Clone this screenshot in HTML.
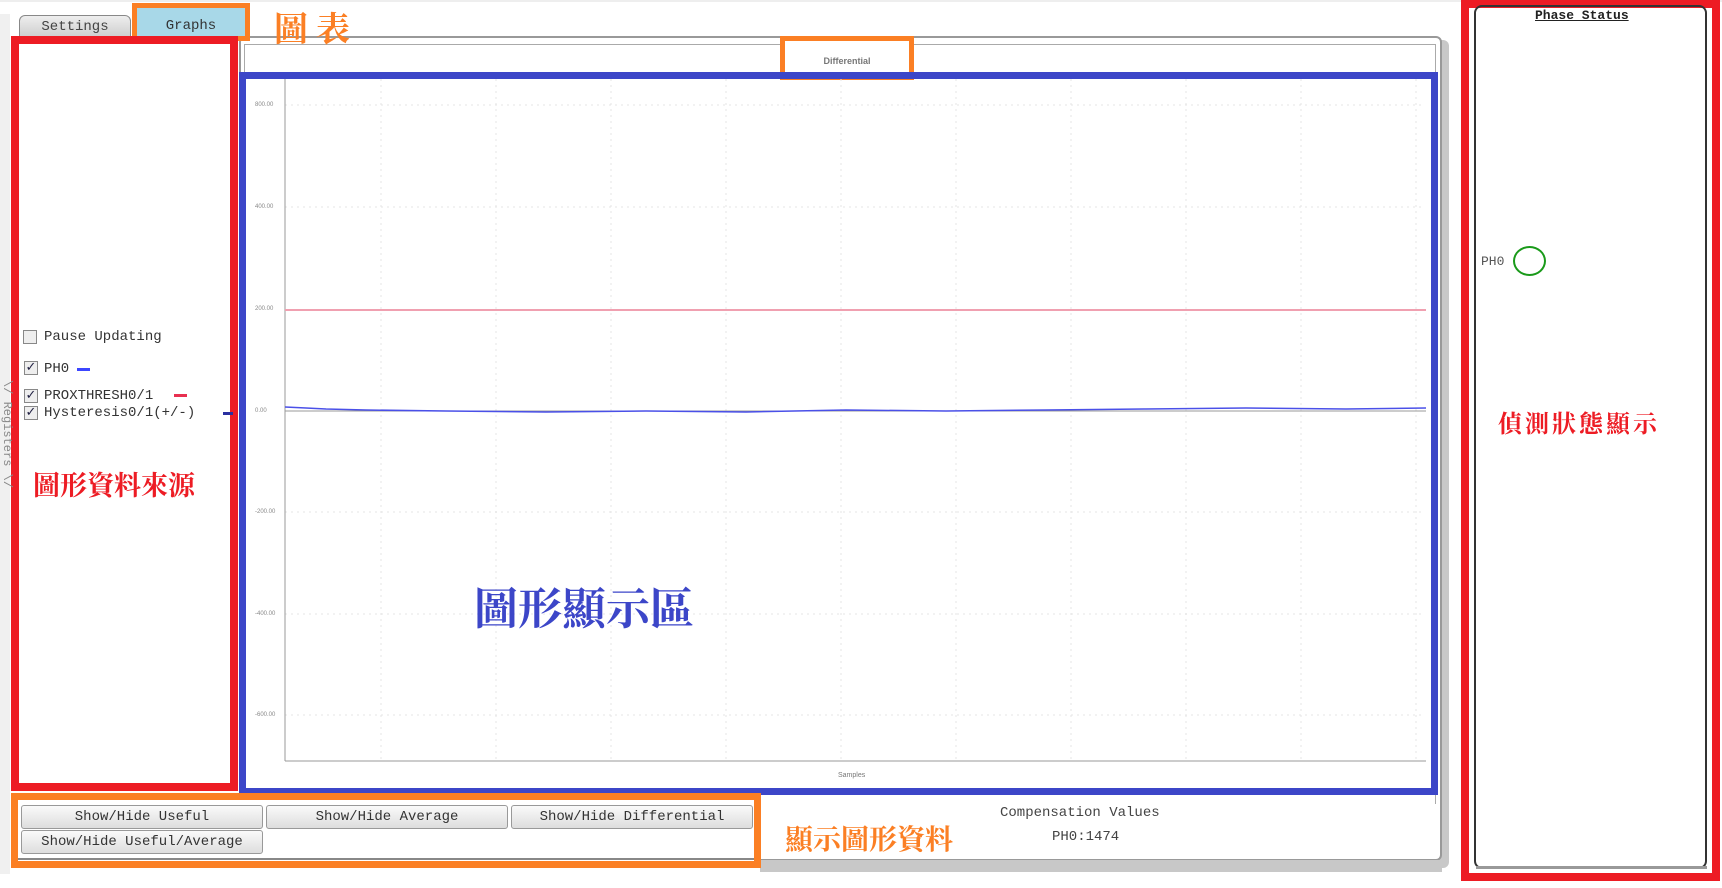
<!DOCTYPE html>
<html><head><meta charset="utf-8"><style>
*{margin:0;padding:0;box-sizing:border-box}
body{width:1722px;height:888px;background:#fff;position:relative;overflow:hidden;font-family:"Liberation Mono",monospace;color:#444}
.a{position:absolute}
.cjk{font-family:"Liberation Serif","Noto Serif CJK SC","WenQuanYi Zen Hei",serif;font-weight:bold;white-space:nowrap}
.btn{position:absolute;height:24px;border:1px solid #999;border-radius:3px;background:linear-gradient(#fafafa,#ddd);font-size:14px;text-align:center;line-height:22px;color:#333}
.cb{position:absolute;width:14px;height:14px;border:1px solid #888;background:#eee;font-size:13px;line-height:12px;color:#224;text-align:center;font-family:"DejaVu Sans",sans-serif}
.lbl{position:absolute;font-size:14px;color:#333;white-space:nowrap}
.yl{position:absolute;font-size:6px;color:#888;font-family:"Liberation Sans",sans-serif;left:255px}
</style></head><body>
<div class="a" style="left:0;top:0;width:1722px;height:2px;background:#eee"></div>
<div class="a" style="left:0;top:14px;width:10px;height:860px;background:#f0f0f0"></div>
<!-- main panel -->
<div class="a" style="left:244px;top:40px;width:1205px;height:828px;background:#c8c8c8;border-radius:6px"></div>
<div class="a" style="left:239px;top:36px;width:1203px;height:825px;border:2px solid #999;border-radius:6px;background:#fff"></div>
<div class="a" style="left:244px;top:44px;width:1192px;height:760px;border:1px solid #aaa;border-bottom:none;background:#fff"></div>
<!-- tabs -->
<div class="a" style="left:19px;top:15px;width:112px;height:24px;border:1px solid #888;border-radius:6px 6px 0 0;background:linear-gradient(#eee,#ccc);font-size:14px;text-align:center;line-height:22px;color:#444">Settings</div>
<div class="a" style="left:132px;top:3px;width:118px;height:38px;border:5px solid #fb7f24;background:#a8d8e8;font-size:14px;text-align:center;line-height:36px;color:#333">Graphs</div>
<div class="a cjk" style="left:274px;top:2px;font-size:34px;color:#fb7f24;letter-spacing:8px;z-index:5">圖表</div>
<div class="a" style="left:780px;top:36px;width:134px;height:44px;border:5px solid #fb7f24;background:#fff;font-size:9px;font-family:'Liberation Sans',sans-serif;color:#777;text-align:center;line-height:40px;font-weight:bold">Differential</div>
<div class="a" style="left:239px;top:72px;width:1199px;height:723px;border:7px solid #3c46c8"></div>
<!-- plot -->
<svg class="a" style="left:246px;top:79px" width="1186" height="710">
<g stroke="#e4e4e4" stroke-dasharray="2,4" stroke-width="1">
<line x1="39" y1="26" x2="1178" y2="26"/><line x1="39" y1="128" x2="1178" y2="128"/><line x1="39" y1="433" x2="1178" y2="433"/><line x1="39" y1="535" x2="1178" y2="535"/><line x1="39" y1="636" x2="1178" y2="636"/>
<line x1="135" y1="0" x2="135" y2="682"/><line x1="250" y1="0" x2="250" y2="682"/><line x1="365" y1="0" x2="365" y2="682"/><line x1="480" y1="0" x2="480" y2="682"/><line x1="595" y1="0" x2="595" y2="682"/><line x1="710" y1="0" x2="710" y2="682"/><line x1="825" y1="0" x2="825" y2="682"/><line x1="940" y1="0" x2="940" y2="682"/><line x1="1055" y1="0" x2="1055" y2="682"/><line x1="1170" y1="0" x2="1170" y2="682"/>
</g>
<line x1="39" y1="0" x2="39" y2="682" stroke="#999"/>
<line x1="39" y1="682" x2="1180" y2="682" stroke="#999"/>
<line x1="39" y1="332" x2="1180" y2="332" stroke="#999"/>
<line x1="39" y1="231" x2="1180" y2="231" stroke="#f0a0b0" stroke-width="2"/>
<polyline fill="none" stroke="#4a50e8" stroke-width="1.5" points="39,328 60,329 80,330 120,331 200,332 300,333 400,332 500,333 600,331 700,332 800,331 900,330 1000,329 1100,330 1180,329"/>
</svg>
<div class="yl" style="top:102px">800.00</div>
<div class="yl" style="top:204px">400.00</div>
<div class="yl" style="top:306px">200.00</div>
<div class="yl" style="top:408px">0.00</div>
<div class="yl" style="top:509px">-200.00</div>
<div class="yl" style="top:611px">-400.00</div>
<div class="yl" style="top:712px">-600.00</div>
<div class="a" style="left:838px;top:772px;font-size:7px;color:#777;font-family:'Liberation Sans',sans-serif">Samples</div>
<div class="a cjk" style="left:474px;top:573px;font-size:44px;color:#3c46c8">圖形顯示區</div>
<!-- left panel -->
<div class="a" style="left:11px;top:36px;width:227px;height:755px;border:8px solid #ed1c24;background:#fff"></div>
<div class="a" style="top:380px;font-size:12px;color:#888;transform:rotate(90deg);transform-origin:0 0;left:14px;white-space:nowrap">\/ Registers \/</div>
<div class="cb" style="left:23px;top:330px"></div><div class="lbl" style="left:44px;top:329px">Pause Updating</div>
<div class="cb" style="left:24px;top:361px">✓</div><div class="lbl" style="left:44px;top:361px">PH0</div><div class="a" style="left:77px;top:368px;width:13px;height:3px;background:#3c46ff"></div>
<div class="cb" style="left:24px;top:389px">✓</div><div class="lbl" style="left:44px;top:388px">PROXTHRESH0/1</div><div class="a" style="left:174px;top:394px;width:13px;height:3px;background:#e83050"></div>
<div class="cb" style="left:24px;top:406px">✓</div><div class="lbl" style="left:44px;top:405px">Hysteresis0/1(+/-)</div><div class="a" style="left:223px;top:412px;width:10px;height:3px;background:#2a30a0"></div>
<div class="a cjk" style="left:33px;top:464px;font-size:27px;color:#ed1c24">圖形資料來源</div>
<!-- bottom -->
<div class="a" style="left:760px;top:860px;width:682px;height:12px;background:#c8c8c8"></div>
<div class="a" style="left:11px;top:793px;width:750px;height:75px;border:7px solid #fb7f24;background:#fff"></div>
<div class="a" style="left:18px;top:858px;width:736px;height:2px;background:#888"></div>
<div class="btn" style="left:21px;top:805px;width:242px">Show/Hide Useful</div>
<div class="btn" style="left:266px;top:805px;width:242px">Show/Hide Average</div>
<div class="btn" style="left:511px;top:805px;width:242px">Show/Hide Differential</div>
<div class="btn" style="left:21px;top:830px;width:242px">Show/Hide Useful/Average</div>
<div class="a cjk" style="left:785px;top:818px;font-size:28px;color:#fb7f24">顯示圖形資料</div>
<div class="a" style="left:1000px;top:805px;font-size:14px;color:#444">Compensation Values</div>
<div class="a" style="left:1052px;top:829px;font-size:14px;color:#444">PH0:1474</div>
<!-- right panel -->
<div class="a" style="left:1461px;top:0;width:259px;height:881px;border:8px solid #ed1c24;background:#fff"></div>
<div class="a" style="left:1474px;top:5px;width:233px;height:864px;border:2px solid #333;border-radius:8px"></div>
<div class="a" style="left:1476px;top:866px;width:231px;height:3px;background:#999"></div>
<div class="a" style="left:1535px;top:8px;font-size:13px;font-weight:bold;color:#222;text-decoration:underline">Phase Status</div>
<div class="a" style="left:1481px;top:254px;font-size:13px;color:#555">PH0</div>
<div class="a" style="left:1513px;top:246px;width:33px;height:30px;border:2px solid #1a9a1a;border-radius:50%"></div>
<div class="a cjk" style="left:1498px;top:404px;font-size:24px;color:#ed1c24;letter-spacing:3px">偵測狀態顯示</div>
</body></html>
